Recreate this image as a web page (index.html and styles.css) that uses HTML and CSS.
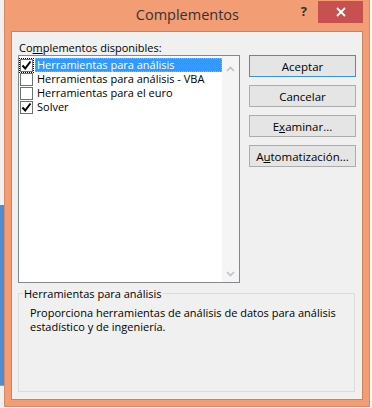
FILE: index.html
```html
<!DOCTYPE html>
<html lang="es">
<head>
  <meta charset="UTF-8" />
  <title>Complementos</title>
  <link rel="stylesheet" href="styles.css">
</head>
<body>

<div class="screen">
  <div class="edge">
    <div class="edge-top"></div>
    <div class="edge-blue"></div>
    <div class="edge-bottom"></div>
  </div>

  <div class="window">
    <div class="titlebar">
      <span class="title">Complementos</span>
      <span class="help">?</span>
      <button class="close" aria-label="Cerrar">
        <svg width="10" height="10" viewBox="0 0 10 10"><path d="M1 1 L9 9 M9 1 L1 9" stroke="#fff" stroke-width="1.8"/></svg>
      </button>
    </div>

    <div class="content">
      <div class="label">Co<u>m</u>plementos disponibles:</div>

      <div class="main">
        <div class="listbox">
          <ul class="items">
            <li class="item selected">
              <span class="check focus">
                <svg width="11" height="11" viewBox="0 0 11 11"><path d="M1.5 5.5 L4.2 8.5 L9.5 1.5" fill="none" stroke="#000" stroke-width="2"/></svg>
              </span>
              <span class="text">Herramientas para análisis</span>
            </li>
            <li class="item">
              <span class="check"></span>
              <span class="text">Herramientas para análisis - VBA</span>
            </li>
            <li class="item">
              <span class="check"></span>
              <span class="text">Herramientas para el euro</span>
            </li>
            <li class="item">
              <span class="check">
                <svg width="11" height="11" viewBox="0 0 11 11"><path d="M1.5 5.5 L4.2 8.5 L9.5 1.5" fill="none" stroke="#000" stroke-width="2"/></svg>
              </span>
              <span class="text">Solver</span>
            </li>
          </ul>
          <div class="scrollbar">
            <svg width="9" height="6" viewBox="0 0 9 6"><path d="M1 5 L4.5 1.5 L8 5" fill="none" stroke="#c2c2c2" stroke-width="1.6"/></svg>
            <svg width="9" height="6" viewBox="0 0 9 6"><path d="M1 1 L4.5 4.5 L8 1" fill="none" stroke="#c2c2c2" stroke-width="1.6"/></svg>
          </div>
        </div>

        <div class="buttons">
          <button class="btn default">Aceptar</button>
          <button class="btn">Cancelar</button>
          <button class="btn">E<u>x</u>aminar...</button>
          <button class="btn">A<u>u</u>tomatización...</button>
        </div>
      </div>

      <fieldset class="group">
        <legend>Herramientas para análisis</legend>
        <p>Proporciona herramientas de análisis de datos para análisis estadístico y de ingeniería.</p>
      </fieldset>
    </div>
  </div>
</div>

</body>
</html>
```

FILE: styles.css
```css
body {
  margin: 0;
  background: #ffffff;
  font-family: 'Segoe UI', 'Open Sans', sans-serif;
  font-size: 11px;
  color: #000;
}

.screen {
  display: flex;
  width: 372px;
  height: 408px;
  overflow: hidden;
}

/* bits of the desktop peeking out on the left */
.edge {
  width: 4px;
  display: flex;
  flex-direction: column;
}

.edge-top {
  height: 205px;
  background: #f0f0f0;
}

.edge-blue {
  height: 180px;
  background: #4f8ccf;
  border-bottom: 1px solid #a0a0a0;
}

.edge-bottom {
  flex: 1;
  background: #f0f0f0;
}

.window {
  width: 364px;
  height: 406px;
  background: #f29d74;
  border: 1px solid #d98a63;
  border-top: none;
  display: flex;
  flex-direction: column;
}

.titlebar {
  height: 31px;
  display: flex;
  align-items: flex-start;
}

.title {
  flex: 1;
  text-align: center;
  font-size: 14.5px;
  color: #333;
  padding-top: 5px;
  padding-left: 69px;
}

.help {
  font-family: 'Open Sans', sans-serif;
  font-weight: bold;
  font-size: 13px;
  color: #333;
  margin-top: 2px;
  margin-right: 11px;
}

.close {
  width: 45px;
  height: 22px;
  margin-top: 1px;
  margin-right: 6px;
  border: none;
  background: #c75050;
  display: flex;
  align-items: center;
  justify-content: center;
  padding: 0;
}

.content {
  margin: 0 6px;
  height: 367px;
  background: #f0f0f0;
  border: 1px solid #c8845f;
  padding: 0 6px;
}

.label {
  margin: 8px 0 0 1px;
  line-height: 15px;
}

.main {
  display: flex;
}

.listbox {
  width: 220px;
  height: 226px;
  border: 1px solid #828790;
  background: #fff;
  display: flex;
}

.items {
  list-style: none;
  margin: 0;
  padding: 2px 0 0 1px;
  flex: 1;
}

.item {
  display: flex;
  align-items: center;
  height: 14px;
}

.check {
  width: 11px;
  height: 11px;
  border: 1px solid #707070;
  background: #fff;
  display: flex;
  align-items: center;
  justify-content: center;
  margin-right: 2px;
}

.check.focus {
  outline: 1px dotted #000;
}

.item .text {
  padding: 0 2px;
  line-height: 14px;
}

.item.selected .text {
  flex: 1;
  background: #3399ff;
  color: #fff;
  outline: 1px dotted #f0a040;
  outline-offset: -1px;
}

.scrollbar {
  width: 17px;
  background: #f5f5f5;
  display: flex;
  flex-direction: column;
  justify-content: space-between;
  align-items: center;
  padding: 10px 0 5px;
}

.buttons {
  display: flex;
  flex-direction: column;
  gap: 8px;
  margin-left: 9px;
}

.btn {
  width: 107px;
  height: 22px;
  font-family: inherit;
  font-size: 11.5px;
  color: #000;
  background: #e5e5e5;
  border: 1px solid #acacac;
  padding: 0;
}

.btn.default {
  border-color: #3c8fe0;
}

.group {
  margin: 3px 0 0 0;
  width: 337px;
  height: 106px;
  border: 1px solid #dcdcdc;
  padding: 0 8px;
  box-sizing: border-box;
}

.group legend {
  padding: 0 1px;
  margin-left: -4px;
}

.group p {
  margin: 5px 0 0 3px;
  line-height: 14px;
}
```
